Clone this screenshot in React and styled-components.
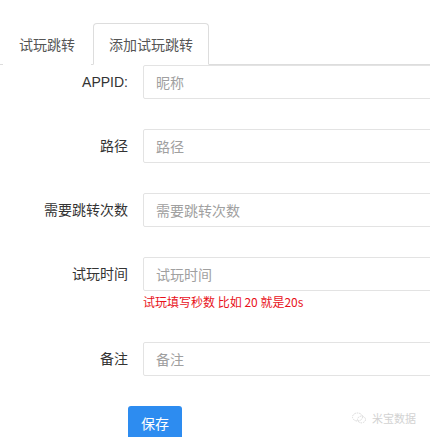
import React from "react";
import styled, { createGlobalStyle } from "styled-components";

const Global = createGlobalStyle`
  html, body { margin: 0; padding: 0; background: #fff; }
  body { overflow: hidden; font-family: "Liberation Sans", "Noto Sans CJK SC", sans-serif; font-size: 14px; color: #333; }
  #root { width: 430px; height: 437px; overflow: hidden; position: relative; }
`;

const Page = styled.div`
  display: flex;
  flex-direction: column;
`;

const TabBar = styled.div`
  display: flex;
  padding: 23px 0 0 3px;
  border-bottom: 1px solid #ddd;
`;

const Tab = styled.div`
  height: 40px;
  line-height: 40px;
  padding: 0 15px;
  margin-right: 2px;
  margin-bottom: -1px;
  color: #555;
  font-family: "Noto Sans CJK SC", sans-serif;
  font-size: 14px;
  border: 1px solid ${(p) => (p.$active ? "#ddd" : "transparent")};
  border-bottom-color: ${(p) => (p.$active ? "#fff" : "transparent")};
  border-radius: 4px 4px 0 0;
  background: #fff;
`;

const Form = styled.div`
  display: flex;
  flex-direction: column;
  gap: 30px;
`;

const Row = styled.div`
  display: grid;
  grid-template-columns: 128px 300px;
  column-gap: 15px;
  align-items: start;
`;

const Label = styled.div`
  height: 34px;
  line-height: 34px;
  text-align: right;
  color: #333;
  font-size: 14px;
  white-space: nowrap;
`;

const Field = styled.div`
  display: flex;
  flex-direction: column;
`;

const Input = styled.input`
  box-sizing: border-box;
  width: 300px;
  height: 34px;
  padding: 0 12px;
  border: 1px solid #e3e3e3;
  border-radius: 2px;
  font-family: "Noto Sans CJK SC", sans-serif;
  font-size: 14px;
  color: #333;
  outline: none;
  &::placeholder { color: #a0a0a0; }
`;

const Hint = styled.div`
  padding-top: 2px;
  line-height: 18px;
  height: 19px;
  font-size: 12px;
  color: #e8101a;
  font-family: "Noto Sans CJK SC", sans-serif;
  white-space: nowrap;
`;

const Actions = styled.div`
  display: flex;
  padding-left: 128px;
`;

const Button = styled.button`
  height: 34px;
  padding: 0 13px;
  border: none;
  border-radius: 3px;
  background: #2d8cf0;
  color: #fff;
  font-family: "Noto Sans CJK SC", sans-serif;
  font-size: 14px;
`;

const Watermark = styled.div`
  position: absolute;
  left: 352px;
  top: 410px;
  display: flex;
  align-items: center;
  gap: 6px;
  color: #c8c8c8;
  font-family: "Noto Sans CJK SC", sans-serif;
  font-size: 11px;
  opacity: 0.8;
`;

const fields = [
  { label: "APPID:", ph: "昵称" },
  { label: "路径", ph: "路径" },
  { label: "需要跳转次数", ph: "需要跳转次数" },
  { label: "试玩时间", ph: "试玩时间", hint: "试玩填写秒数 比如 20 就是20s" },
  { label: "备注", ph: "备注" },
];

export default function App() {
  return (
    <Page>
      <Global />
      <TabBar>
        <Tab>试玩跳转</Tab>
        <Tab $active>添加试玩跳转</Tab>
      </TabBar>
      <Form>
        {fields.map((f) => (
          <Row key={f.label}>
            <Label>{f.label}</Label>
            <Field>
              <Input placeholder={f.ph} />
              {f.hint && <Hint>{f.hint}</Hint>}
            </Field>
          </Row>
        ))}
        <Actions>
          <Button>保存</Button>
        </Actions>
      </Form>
      <Watermark>
        <svg width="14" height="12" viewBox="0 0 14 12" fill="none" stroke="#cfcfcf" strokeWidth="1" strokeDasharray="1.5 1">
          <ellipse cx="5.5" cy="5" rx="5" ry="4" />
          <ellipse cx="9.5" cy="7.5" rx="4" ry="3.3" />
        </svg>
        <span>米宝数据</span>
      </Watermark>
    </Page>
  );
}
